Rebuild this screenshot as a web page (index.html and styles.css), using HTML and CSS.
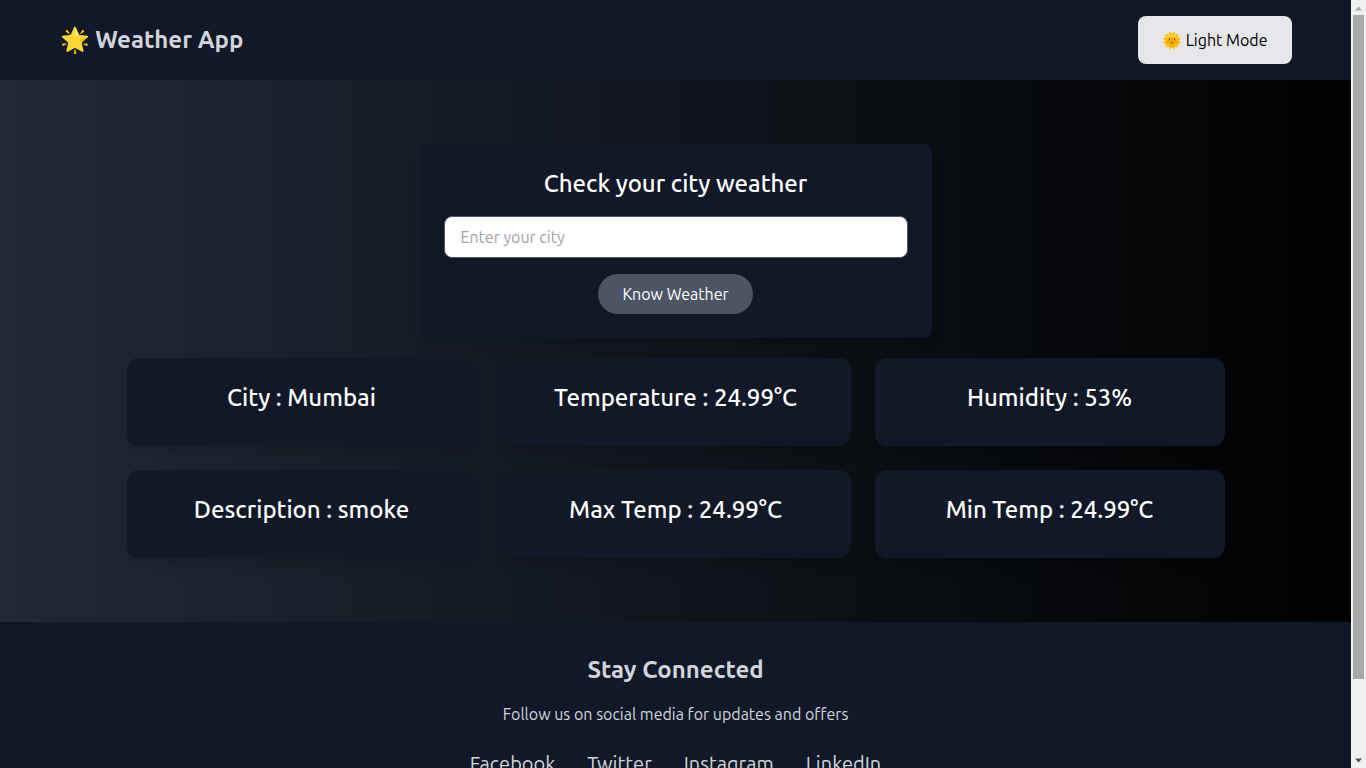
FILE: index.html
```html
<!DOCTYPE html>
<html lang="en">
<head>
<meta charset="utf-8">
<meta name="viewport" content="width=device-width, initial-scale=1">
<title>Weather App</title>
<link rel="stylesheet" href="styles.css">
</head>
<body>
<div class="viewport">
  <div class="page">
    <header class="topbar">
      <div class="topbar-inner">
        <h1 class="brand">🌟 Weather App</h1>
        <button class="mode-button" type="button">🌞 Light Mode</button>
      </div>
    </header>

    <main class="main">
      <form class="search">
        <h2 class="title"><label for="city">Check your city weather</label></h2>
        <input class="search-input" id="city" type="text" placeholder="Enter your city">
        <button class="search-button" type="button">Know Weather</button>
      </form>
      <section class="cards" aria-label="Current weather">
        <article class="card"><h2 class="title">City : Mumbai</h2></article>
        <article class="card"><h2 class="title">Temperature : 24.99°C</h2></article>
        <article class="card"><h2 class="title">Humidity : 53%</h2></article>
        <article class="card"><h2 class="title">Description : smoke</h2></article>
        <article class="card"><h2 class="title">Max Temp : 24.99°C</h2></article>
        <article class="card"><h2 class="title">Min Temp : 24.99°C</h2></article>
      </section>
    </main>

    <footer class="footer">
      <h2 class="footer-title">Stay Connected</h2>
      <p class="footer-text">Follow us on social media for updates and offers</p>
      <nav class="social" aria-label="Social media">
        <a href="#facebook">Facebook</a>
        <a href="#twitter">Twitter</a>
        <a href="#instagram">Instagram</a>
        <a href="#linkedin">LinkedIn</a>
      </nav>
    </footer>
  </div>
  <div class="scrollbar" aria-hidden="true">
    <svg class="scroll-arrow" viewBox="0 0 15 14"><path d="M4 10l3.500-4L11 10z" fill="#a3a3a3"/></svg>
    <div class="scroll-track"><div class="scroll-thumb"></div></div>
    <svg class="scroll-arrow" viewBox="0 0 15 14"><path d="M4 5l3.500 4L11 5z" fill="#505050"/></svg>
  </div>
</div>
</body>
</html>
```
FILE: styles.css
```css
* {
  box-sizing: border-box;
}

body,
h1,
h2,
p {
  margin: 0;
}

body {
  background: #111827;
  color: #fff;
  font-family: Ubuntu, "Noto Sans", sans-serif;
  font-size: 16px;
  font-weight: 400;
  line-height: 24px;
}

button,
input {
  font: inherit;
}

.viewport {
  display: flex;
  height: 100vh;
  overflow: hidden;
}

.page {
  flex: 1;
  min-width: 0;
  overflow: hidden;
}

.topbar {
  background: #111827;
}

.topbar-inner {
  display: flex;
  align-items: center;
  justify-content: space-between;
  max-width: 1280px;
  margin: 0 auto;
  padding: 16px 24px;
}

.brand {
  color: #d1d5db;
  font-size: 24px;
  font-weight: 600;
  line-height: 32px;
}

.mode-button {
  padding: 12px 24px;
  border: 0;
  border-radius: 8px;
  background: #e5e7eb;
  color: #000;
  box-shadow: 0 4px 6px -1px rgba(0, 0, 0, 0.1);
}

.main {
  display: flex;
  flex-direction: column;
  align-items: center;
  gap: 20px;
  padding: 64px 24px;
  background: linear-gradient(to right, #1f2937, #000);
}

.title {
  font-size: 24px;
  font-weight: 550;
  line-height: 32px;
  text-align: center;
}

.search {
  display: flex;
  flex-direction: column;
  align-items: center;
  gap: 16px;
  width: 100%;
  max-width: 512px;
  padding: 24px;
  border-radius: 8px;
  background: #111827;
  box-shadow: 0 10px 15px -3px rgba(0, 0, 0, 0.1), 0 4px 6px -4px rgba(0, 0, 0, 0.1);
}

.search-input {
  width: 100%;
  height: 42px;
  padding: 8px 16px;
  border: 1px solid #4b5563;
  border-radius: 8px;
  background: #fff;
  color: #111827;
}

.search-input::placeholder {
  color: #9ca3af;
}

.search-button {
  padding: 8px 24px;
  border: 0;
  border-radius: 20px;
  background: #4b5563;
  color: #fff;
}

.cards {
  display: grid;
  grid-template-columns: repeat(3, 1fr);
  gap: 24px;
  width: 100%;
  max-width: 1098px;
}

.card {
  padding: 24px 24px 32px;
  border-radius: 12px;
  background: #111827;
  box-shadow: 0 10px 15px -3px rgba(0, 0, 0, 0.1), 0 4px 6px -4px rgba(0, 0, 0, 0.1);
}

.footer {
  padding: 32px 24px;
  background: #111827;
  color: #d1d5db;
  text-align: center;
}

.footer-title {
  font-size: 24px;
  font-weight: 600;
  line-height: 32px;
}

.footer-text {
  margin-top: 16px;
}

.social {
  display: flex;
  justify-content: center;
  gap: 32px;
  margin-top: 24px;
  font-size: 20px;
  line-height: 28px;
}

.social a {
  color: inherit;
  text-decoration: none;
}

.scrollbar {
  display: flex;
  flex-direction: column;
  width: 15px;
  background: #f1f1f1;
}

.scroll-arrow {
  width: 15px;
  height: 15px;
}

.scroll-track {
  flex: 1;
  padding: 0 2px;
}

.scroll-thumb {
  height: 90%;
  background: #a8a8a8;
}
```
